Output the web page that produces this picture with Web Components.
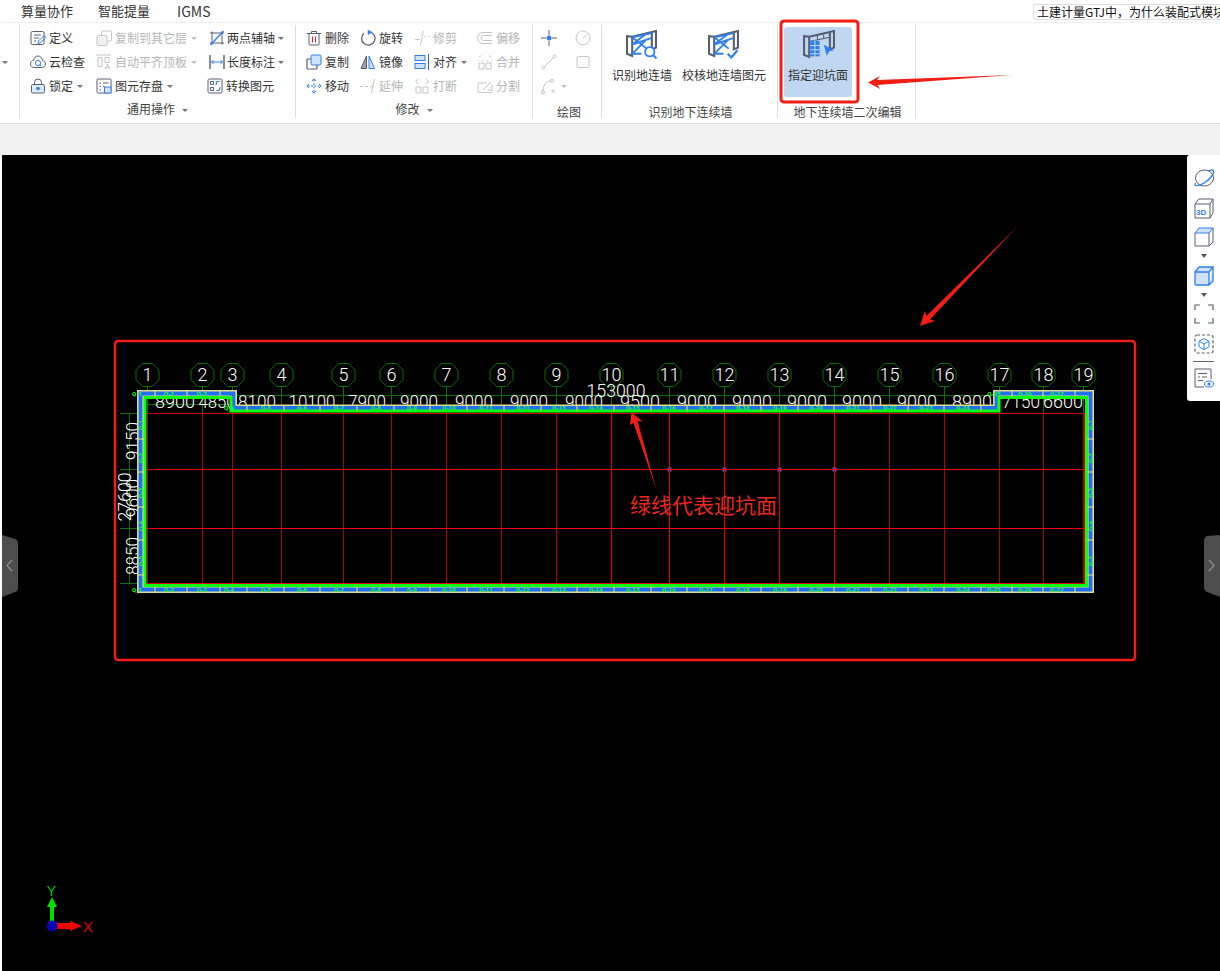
<!DOCTYPE html>
<html lang="zh">
<head>
<meta charset="utf-8">
<title>GTJ</title>
<style>
html, body { margin: 0; padding: 0; background: #fff; }
body { width: 1220px; height: 971px; overflow: hidden; position: relative; font: 12px "Noto Sans CJK SC", "Liberation Sans", sans-serif; color: #333; }
</style>
</head>
<body>
<gtj-tabs>
    <span>算量协作</span>
    <span>智能提量</span>
    <span style="font-size:14px;margin-left:2px">IGMS</span>
    <gtj-search slot="search">土建计量GTJ中，为什么装配式模块</gtj-search>
</gtj-tabs>

<gtj-ribbon>
    <gtj-group style="--w:20px;--pad:2px">
        <gtj-caret style="margin-top:35px"></gtj-caret>
    </gtj-group>

    <gtj-group label="通用操作" caret style="--w:276px;--pad:10px;--cols:66px 113px 1fr;--shift:-4px">
        <gtj-item icon="define">定义</gtj-item>
        <gtj-item icon="copylayer" disabled caret>复制到其它层</gtj-item>
        <gtj-item icon="twopoint" caret style="gap:2px">两点辅轴</gtj-item>
        <gtj-item icon="cloud">云检查</gtj-item>
        <gtj-item icon="level" disabled caret>自动平齐顶板</gtj-item>
        <gtj-item icon="length" caret style="gap:2px">长度标注</gtj-item>
        <gtj-item icon="lock" caret>锁定</gtj-item>
        <gtj-item icon="storage" caret>图元存盘</gtj-item>
        <gtj-item icon="convert" style="margin-left:-2px">转换图元</gtj-item>
    </gtj-group>

    <gtj-group label="修改" caret style="--w:237px;--pad:10px;--cols:54px 54px 63px 1fr">
        <gtj-item icon="trash">删除</gtj-item>
        <gtj-item icon="rotate">旋转</gtj-item>
        <gtj-item icon="trim" disabled>修剪</gtj-item>
        <gtj-item icon="offset" disabled>偏移</gtj-item>
        <gtj-item icon="copy">复制</gtj-item>
        <gtj-item icon="mirror">镜像</gtj-item>
        <gtj-item icon="align" caret>对齐</gtj-item>
        <gtj-item icon="merge" disabled>合并</gtj-item>
        <gtj-item icon="move">移动</gtj-item>
        <gtj-item icon="extend" disabled>延伸</gtj-item>
        <gtj-item icon="break" disabled>打断</gtj-item>
        <gtj-item icon="split" disabled>分割</gtj-item>
    </gtj-group>

    <gtj-group label="绘图" low style="--w:69px;--pad:8px;--cols:34px 1fr;--shift:4px">
        <gtj-item icon="point"></gtj-item>
        <gtj-item icon="gauge" disabled></gtj-item>
        <gtj-item icon="line" disabled></gtj-item>
        <gtj-item icon="rrect" disabled></gtj-item>
        <gtj-item icon="arc" disabled caret></gtj-item>
    </gtj-group>

    <gtj-group label="识别地下连续墙" low style="--w:176px;--pad:10px;--cols:60px 84px;--gap:10px;--rows:72px;--shift:2px">
        <gtj-big icon="find" style="--nudge:-2px">识别地连墙</gtj-big>
        <gtj-big icon="check" style="--nudge:-2px">校核地连墙图元</gtj-big>
    </gtj-group>

    <gtj-group label="地下连续墙二次编辑" low style="--w:138px;--pad:6px;--cols:68px;--rows:72px;--shift:2px">
        <gtj-big icon="face" active>指定迎坑面</gtj-big>
    </gtj-group>
</gtj-ribbon>

<gtj-band></gtj-band>

<cad-view>
    <cad-drawing></cad-drawing>
    <cad-handle side="left"></cad-handle>
    <cad-handle side="right"></cad-handle>
    <cad-viewbar></cad-viewbar>
</cad-view>

<cad-notes></cad-notes>

<script>
const ICONS = {
    define: `<rect class="d" x="1" y="1.5" width="13" height="13" rx="1.5"/><path class="d" d="M4 5h7M4 8h5M4 11h2"/><path class="b" d="M8 13.5l.5-2.5 5.5-5.5 1.8 1.8-5.5 5.6z"/>`,
    cloud: `<path class="d" d="M4.2 13.5C2 13.500.5 12 .5 10s1.500-3.300 3-3.500C4 3.500 6 2 8 2s4 1.500 4.500 4.500c1.800.2 3 1.700 3 3.500s-1.500 3.500-3.700 3.500z"/><circle class="b" cx="8" cy="9" r="2.600"/><path class="b" d="M10 11l1.500 1.300"/>`,
    lock: `<path class="d" d="M4.500 6.500V4.500a3.500 3.500 0 0 1 7 0v2"/><rect class="d" x="1.500" y="6.500" width="13" height="8.500" rx="1.200" style="fill:#dfeafa"/><path class="s" d="M8 9v3.500M6.500 9.500h3v2h-3z"/>`,
    copylayer: `<rect class="g" x="5.500" y="1" width="10" height="10" rx="1.500"/><rect class="g" x="1" y="5.500" width="10" height="10" rx="1.500" style="fill:#f2f2f2"/>`,
    level: `<path class="g" d="M0 1h15M2 3.500h4v9H2zM9 3.500h4v5H9z"/><path class="g" d="M9 15l2.500-5 2.500 5M10 13.500h3"/>`,
    storage: `<rect class="d" x="1" y="1" width="14" height="14" rx="1.200"/><path class="d" d="M3.500 5h1.500M7 5h5.500M3.500 8.500h1.500M3.500 12h1.500M7 8.500h1.500"/><rect class="f" x="8.500" y="9" width="6.500" height="6"/>`,
    twopoint: `<path class="d" d="M3 1.500v13M1 3h14M1 13h14M13 1.500v13"/><path class="b" style="stroke-width:1.500" d="M1.500 15L14.500 1"/>`,
    length: `<path class="d" style="stroke-width:1.400" d="M1 1v14M15 1v14"/><path class="b" d="M2.500 8h11M4.500 6l-2 2 2 2M11.500 6l2 2-2 2"/>`,
    convert: `<rect class="d" x="1" y="1" width="14" height="14" rx="1.500"/><path class="d" d="M3.500 3.500h3v3h-3zM3.500 9.500h3v3h-3z"/><path class="b" d="M9.500 6.500v-3h3M12.500 9.500v3h-3M9.500 5l-1 1.500M12.500 11l1-1.500"/>`,
    trash: `<path class="d" d="M1 3.500h14M5.500 3.500V1.500h5v2"/><path class="d" d="M3 3.500v10.500a1 1 0 0 0 1 1h8a1 1 0 0 0 1-1V3.500"/><path class="r" d="M6.500 6.500v6M9.500 6.500v6"/>`,
    rotate: `<path class="d" style="stroke-width:1.300" d="M9.500 1.800A6.700 6.700 0 1 1 4 3.300"/><path class="s" d="M8 .2l4 2-4 2.400z"/>`,
    trim: `<path class="g" d="M1 9.500h5M10 6.500h1.500M14 6.500h1.500M6.500 15L9.500 1"/>`,
    offset: `<path class="g" d="M15 2.500H6a5.500 5.500 0 0 0 0 11h9M15 5.500H6.500a2.500 2.500 0 0 0 0 5H15"/>`,
    copy: `<rect class="f" x="5" y="1" width="10" height="10" rx="1.200"/><path class="d" style="stroke-width:1.200" d="M5 5H2a1 1 0 0 0-1 1v8a1 1 0 0 0 1 1h8a1 1 0 0 0 1-1v-3"/>`,
    mirror: `<path class="d" style="fill:#9aa2b2;stroke:#565e70" d="M6.500 2L1 14.500h5.500z"/><path class="f" d="M9 2l5.500 12.500H9z"/>`,
    align: `<rect class="f" x="1" y="1.500" width="10" height="5"/><rect class="f" x="1" y="9.500" width="10" height="5"/><path class="d" d="M14.500 0v16"/>`,
    merge: `<path class="g" d="M4 1.500l-2 2M12 1.500l2 2M2 9h5v6H2zM9 9h5v6H9z"/><path class="g" d="M1 6.500h1M5 6.500h1M10 6.500h1M14 6.500h1"/>`,
    move: `<path class="b" style="stroke-dasharray:2 1.400" d="M8 1.500v13M1.500 8h13"/><path class="b" d="M6 3l2-2.200L10 3M6 13l2 2.200 2-2.200M3 6L.8 8 3 10M13 6l2.200 2-2.200 2"/>`,
    extend: `<path class="g" d="M0 8.500h3M5 8.500h3M10 8.500h3M11.500 15L14.500 1"/>`,
    break: `<path class="g" d="M2 9h5v6H2zM9 9h5v6H9zM4 1L1.500 3.500 4 6M12 1l2.500 2.500L12 6"/>`,
    split: `<path class="g" d="M15 7v6.500a1 1 0 0 1-1 1H2a1 1 0 0 1-1-1V6a1 1 0 0 1 1-1h7M6 12l8-8M10.500 12H14"/>`,
    point: `<path class="d" d="M0 8h5M11 8h5M8 0v5M8 11v5"/><circle cx="8" cy="8" r="2.500" fill="#2f80ed"/>`,
    gauge: `<circle class="g" cx="8" cy="8" r="7"/><path class="g" d="M8 8l3.500-3.500"/>`,
    line: `<path class="g" d="M3.500 12.500L12.500 3.500"/><circle class="g" cx="2.500" cy="13.500" r="1.500"/><circle class="g" cx="13.500" cy="2.500" r="1.500"/>`,
    rrect: `<rect class="g" x="2" y="2.500" width="12" height="11" rx="1.500"/>`,
    arc: `<path class="g" d="M2 12C2.500 7 5 3.500 9 2.800"/><circle class="g" cx="2" cy="14" r="1.500"/><circle class="g" cx="11" cy="2.800" r="1.500"/><circle class="g" cx="12" cy="13" r="1.200"/>`,
};

// big ribbon icons sit on a 30x28 box: the steel frame is shared
const FRAME = `<path class="d" style="stroke-width:2" d="M1 6v17l5 2V6.500zM1 6l5 .5M25 2l4-1v16l-4 1.500zM25 2L6 6.500"/>`;
const TRUSS = `<path class="b" style="stroke-width:1.800" d="M6 7L25 3M6 14l19-6.500M6 14l13-10M6 7l14 11M6 23l13-13M6 23h9"/>`;
const BIG_ICONS = {
    find: FRAME + TRUSS + `<circle cx="23" cy="21" r="4.500" fill="#fff" stroke="#2f80ed" stroke-width="1.800"/><path class="b" style="stroke-width:2" d="M26.500 24.500l3 3"/>`,
    check: FRAME + TRUSS + `<path class="b" style="stroke-width:2.200" d="M19 23l3.500 3.500 6-7"/>`,
    face: `<path class="d" style="stroke-width:2" d="M1 6v18l5 2V6.500zM1 6l5 .5M26 2l4-1v16l-4 1.500zM26 2L6 6.500"/><path class="d" d="M6 11l20-4M14 5v5M20 4v5"/><rect x="7" y="10.500" width="9" height="15" fill="#2f80ed"/><path d="M7 15h9M7 19h9M7 23h9M11.500 10v16" stroke="#c0d8f0" fill="none"/><path fill="#2f80ed" d="M20 14l10 5.500-4.500 1-2.500 4.500z"/>`,
};

const VIEW_ICONS = {
    globe: `<ellipse class="d" cx="10.500" cy="10" rx="9" ry="8"/><path class="b" style="stroke-width:1.400" d="M1.500 15C-.5 19 5 18 10 15s10.500-9 9.500-12c-.5-1.500-3-1-5 .2"/>`,
    cube3d: `<path class="d" d="M1 6h15v14H1zM1 6l4-5h14l-3 5M19 1v14l-3 5"/><text x="2" y="16.500" font-size="8" font-weight="700" fill="#2f80ed" font-family="Liberation Sans">3D</text>`,
    cubetop: `<path class="d" d="M1 7v13h14V7M15 20l4-4V2"/><path class="f" d="M1 7l4-5h14L15 7z"/>`,
    cubefill: `<path class="f" style="stroke-width:1.300" d="M1 7h14v13H2a1 1 0 0 1-1-1zM1 7l4-5h14L15 7M19 2v14l-4 4"/>`,
    corners: `<path class="d" style="stroke-width:1.200" d="M1 6V1h5M14 1h5v5M19 14v5h-5M6 19H1v-5"/>`,
    dashed: `<rect class="d" style="stroke-dasharray:3 2;stroke-width:1.200" x="1" y="1" width="18" height="18" rx="2"/><path class="b" d="M10 4.500l5 2.700v5.600l-5 2.700-5-2.700V7.200zM5 7.200l5 2.800 5-2.800M10 10v5.500"/>`,
    list: `<path class="d" d="M17 11V1H1v18h9"/><path class="d" d="M4 5.500h9M4 9h2M8 9h5M4 12.500h5"/><ellipse class="b" cx="15" cy="16" rx="4.500" ry="3"/><circle cx="15" cy="16" r="1.500" fill="#2f80ed"/>`,
};

const ICON_STYLE = `
.d { fill: none; stroke: #565e70; }
.b { fill: none; stroke: #2f80ed; }
.s { fill: #2f80ed; stroke: #2f80ed; stroke-width: .6; }
.f { fill: #cfe2fa; stroke: #2f80ed; }
.g { fill: none; stroke: #c4c4c4; }
.r { fill: none; stroke: #e02020; }
`;

customElements.define('gtj-tabs', class extends HTMLElement {
    constructor() {
        super();
        this.attachShadow({mode: 'open'}).innerHTML = `
<style>
:host {
    display: flex;
    height: 23px;
    box-sizing: border-box;
    border-bottom: 1px solid #eeeeee;
    background: #fff;
    position: relative;
    font-size: 13px;
    color: #333;
}
.tabs {
    display: flex;
    gap: 25px;
    padding-left: 21px;
    line-height: 22px;
}
.search {
    margin-left: auto;
    padding-top: 4px;
    width: 187px;
}
</style>
<div class="tabs"><slot></slot></div>
<div class="search"><slot name="search"></slot></div>
        `;
    }
});

customElements.define('gtj-search', class extends HTMLElement {
    constructor() {
        super();
        this.attachShadow({mode: 'open'}).innerHTML = `
<style>
:host {
    display: block;
    height: 16px;
    box-sizing: border-box;
    border: 1px solid #dddddd;
    border-right: 0;
    border-radius: 2px 0 0 2px;
    padding-left: 3px;
    font-size: 12px;
    line-height: 14px;
    color: #111;
    white-space: nowrap;
    overflow: hidden;
}
</style>
<slot></slot>
        `;
    }
});

customElements.define('gtj-ribbon', class extends HTMLElement {
    constructor() {
        super();
        this.attachShadow({mode: 'open'}).innerHTML = `
<style>
:host {
    display: flex;
    height: 100px;
    box-sizing: border-box;
    padding: 2px 0 5px;
    background: #fff;
}
</style>
<slot></slot>
        `;
    }
});

customElements.define('gtj-caret', class extends HTMLElement {
    constructor() {
        super();
        this.attachShadow({mode: 'open'}).innerHTML = `
<style>
:host {
    display: inline-block;
    width: 0;
    height: 0;
    border-left: 3px solid transparent;
    border-right: 3px solid transparent;
    border-top: 3px solid var(--caret, #777);
    vertical-align: middle;
}
</style>
        `;
    }
});

customElements.define('gtj-group', class extends HTMLElement {
    connectedCallback() {
        if (this.shadowRoot) return;
        const label = this.getAttribute("label") || "";
        const caret = this.hasAttribute("caret") ? `<gtj-caret style="margin-left:7px"></gtj-caret>` : "";
        this.attachShadow({mode: 'open'}).innerHTML = `
<style>
:host {
    display: block;
    width: var(--w);
    box-sizing: border-box;
    border-right: 1px solid #dcdcdc;
    flex: none;
}
.body {
    display: grid;
    grid-template-columns: var(--cols, 1fr);
    grid-auto-rows: var(--rows, 24px);
    column-gap: var(--gap, 0);
    height: 72px;
    margin-top: 1px;
    padding-left: var(--pad);
}
.label {
    height: 20px;
    box-sizing: border-box;
    padding-top: 2px;
    padding-left: var(--shift, 0);
    text-align: center;
    line-height: 17px;
    color: #444;
    white-space: nowrap;
}
:host([low]) .label {
    padding-top: 5px;
}
</style>
<div class="body"><slot></slot></div>
<div class="label">${label}${caret}</div>
        `;
    }
});

customElements.define('gtj-item', class extends HTMLElement {
    connectedCallback() {
        if (this.shadowRoot) return;
        const caret = this.hasAttribute("caret") ? `<gtj-caret></gtj-caret>` : "";
        this.attachShadow({mode: 'open'}).innerHTML = `
<style>
:host {
    display: flex;
    align-items: center;
    gap: 3px;
    color: #333;
    white-space: nowrap;
    line-height: 24px;
}
:host([disabled]) {
    color: #b5b5b5;
    --caret: #c0c0c0;
}
${ICON_STYLE}
svg {
    width: 16px;
    height: 16px;
    flex: none;
    overflow: visible;
}
gtj-caret {
    margin-left: 1px;
}
</style>
<svg viewBox="0 0 16 16">${ICONS[this.getAttribute("icon")] || ""}</svg>
<slot></slot>
${caret}
        `;
    }
});

customElements.define('gtj-big', class extends HTMLElement {
    connectedCallback() {
        if (this.shadowRoot) return;
        this.attachShadow({mode: 'open'}).innerHTML = `
<style>
:host {
    display: flex;
    flex-direction: column;
    align-items: center;
    height: 70px;
    margin-top: 1px;
    box-sizing: border-box;
    padding-top: 3px;
    border-radius: 3px;
    color: #333;
    white-space: nowrap;
}
:host([active]) {
    background: #bfd7f0;
}
${ICON_STYLE}
svg {
    width: 31px;
    height: 29px;
    flex: none;
    overflow: visible;
    margin-left: var(--nudge, 0);
}
.text {
    margin-top: 8px;
    line-height: 16px;
}
</style>
<svg viewBox="0 0 30 28">${BIG_ICONS[this.getAttribute("icon")] || ""}</svg>
<div class="text"><slot></slot></div>
        `;
    }
});

customElements.define('gtj-band', class extends HTMLElement {
    constructor() {
        super();
        this.attachShadow({mode: 'open'}).innerHTML = `
<style>
:host {
    display: block;
    height: 32px;
    box-sizing: border-box;
    background: #f1f1f1;
    border-top: 1px solid #dcdcdc;
}
</style>
        `;
    }
});

customElements.define('cad-view', class extends HTMLElement {
    constructor() {
        super();
        this.attachShadow({mode: 'open'}).innerHTML = `
<style>
:host {
    display: block;
    position: relative;
    height: 816px;
    margin-left: 2px;
    background: #000;
    overflow: hidden;
}
</style>
<slot></slot>
        `;
    }
});

customElements.define('cad-handle', class extends HTMLElement {
    connectedCallback() {
        if (this.shadowRoot) return;
        const right = this.getAttribute("side") === "right";
        const shape = right
            ? `<path fill="#4d4d4d" d="M0 6Q0 2 3 1L16 0V62L3 57Q0 56 0 52z"/><path fill="none" stroke="#8c8c8c" stroke-width="1.400" d="M5 25l5 5.500-5 5.500"/>`
            : `<path fill="#4d4d4d" d="M0 0L13 4Q16 5 16 9V53Q16 56 13 57L0 62z"/><path fill="none" stroke="#8c8c8c" stroke-width="1.400" d="M10 25l-5 5.500 5 5.500"/>`;
        this.attachShadow({mode: 'open'}).innerHTML = `
<style>
:host {
    display: block;
    position: absolute;
    top: 380px;
    width: 16px;
    height: 62px;
}
:host([side="left"]) { left: 0; }
:host([side="right"]) { right: 0; }
svg { display: block; }
</style>
<svg width="16" height="62" viewBox="0 0 16 62">${shape}</svg>
        `;
    }
});

customElements.define('cad-viewbar', class extends HTMLElement {
    constructor() {
        super();
        const icon = (name, top) => `<svg style="margin-top:${top}px" width="20" height="20" viewBox="0 0 20 20">${VIEW_ICONS[name]}</svg>`;
        const caret = top => `<i class="caret" style="margin-top:${top}px"></i>`;
        this.attachShadow({mode: 'open'}).innerHTML = `
<style>
:host {
    display: flex;
    flex-direction: column;
    align-items: center;
    position: absolute;
    top: 0;
    right: 0;
    width: 33px;
    height: 246px;
    box-sizing: border-box;
    background: #fff;
    border-radius: 3px 0 0 3px;
    padding-left: 0;
}
${ICON_STYLE}
svg { display: block; overflow: visible; flex: none; }
.caret {
    display: block;
    width: 0;
    height: 0;
    border-left: 3.500px solid transparent;
    border-right: 3.500px solid transparent;
    border-top: 4px solid #555;
}
hr {
    width: 21px;
    margin: 7px 0 0;
    border: 0;
    border-top: 1px solid #666;
}
</style>
${icon("globe", 13)}
${icon("cube3d", 10)}
${icon("cubetop", 8)}
${caret(8)}
${icon("cubefill", 7)}
${caret(8)}
${icon("corners", 7)}
${icon("dashed", 10)}
<hr>
${icon("list", 6)}
        `;
    }
});

customElements.define('cad-drawing', class extends HTMLElement {
    constructor() {
        super();
        this.attachShadow({mode: 'open'}).innerHTML = `
<style>
:host { display: block; width: 1218px; height: 816px; }
svg { display: block; }
text { font-family: Roboto, "Liberation Sans", sans-serif; }
.dim { fill: #fff; font-size: 19px; font-weight: 300; text-anchor: middle; }
.no { fill: #fff; font-size: 18px; font-weight: 300; text-anchor: middle; }
.tag { fill: #20ff20; font-size: 6px; font-weight: 700; text-anchor: middle; }
.axis { font-family: "Liberation Sans", sans-serif; text-anchor: middle; }
</style>
<svg width="1218" height="816" viewBox="2 155 1218 816">${this.#scene()}</svg>
        `;
    }

    #scene() {
        const axes = [147, 202, 232, 281, 343, 391, 446, 501, 556, 611, 669, 724, 779, 834, 889, 944, 999, 1043, 1083];
        const hy = [413, 469, 528, 583];
        const top = [[175, "8900", 40], [217, "4850", 37], [257, "8100", 38], [312, "10100", 47], [367, "7900", 38], [419, "9000", 38], [474, "9000", 38], [529, "9000", 38], [584, "9000", 38], [640, "9500", 40], [697, "9000", 40], [752, "9000", 40], [807, "9000", 40], [862, "9000", 40], [917, "9000", 40], [972, "8900", 40], [1021, "7150", 38], [1063, "6600", 40]];
        let s = "";

        // dimension lines
        s += `<g stroke="#0a6e0a" fill="none">`;
        s += `<path d="M147 395.500H1083M147 404.500H232M129.500 413V583M120 413.500H147M120 469.500H147M120 528.500H147M120 583.500H147"/>`;
        axes.forEach(x => s += `<path d="M${x + .5} 387V413"/>`);
        s += `</g>`;

        // axis bubbles
        axes.forEach((x, i) => {
            const points = [];
            for (let k = 0; k < 8; k++) {
                const a = Math.PI / 4 * k + Math.PI / 8;
                points.push(`${(x + .5 + 12.5 * Math.cos(a)).toFixed(1)},${(375 + 12.5 * Math.sin(a)).toFixed(1)}`);
            }
            s += `<polygon points="${points.join(" ")}" fill="none" stroke="#0a6e0a"/>`;
            s += `<text class="no" x="${x + .5}" y="381">${i + 1}</text>`;
        });

        // dimension texts
        top.forEach(([x, t, w]) => s += `<text class="dim" x="${x}" y="407.500" textLength="${w}" lengthAdjust="spacingAndGlyphs">${t}</text>`);
        [[441, "9150", 139, 38], [498, "9600", 139, 38], [556, "8850", 139, 38], [497, "27600", 131, 49]].forEach(([y, t, x, w]) => {
            s += `<text class="dim" transform="translate(${x} ${y}) rotate(-90)" textLength="${w}" lengthAdjust="spacingAndGlyphs">${t}</text>`;
        });

        // column markers sit under the grid lines
        [669, 724, 779, 834].forEach(x => s += `<rect x="${x - 1.500}" y="467.500" width="4" height="4" fill="#6a4bd0"/>`);

        // grid
        axes.forEach((x, i) => {
            const bright = i >= 9 && i <= 13;
            s += `<path d="M${x + .5} 413V583" stroke="${bright ? "#f00000" : "#b40000"}" fill="none"/>`;
        });
        hy.forEach((y, i) => {
            s += `<path d="M147 ${y + .5}H1084" stroke="${i === 0 ? "#c80000" : "#f00000"}" fill="none"/>`;
        });
        s += `<path d="M1084.500 413V583" stroke="#a00000" fill="none"/>`;

        // walls
        const wall = "M140.500 393.500H233.500V408H996.500V393.500H1090.500V589.500H140.500Z";
        s += `<path d="${wall}" fill="none" stroke="#dcdc90" stroke-width="7"/>`;
        s += `<path d="${wall}" fill="none" stroke="#1f6ff0" stroke-width="3.800"/>`;
        s += `<path d="M145 397.500H231V411H999V397.500H1086.500V585.500H145Z" fill="none" stroke="#0cff0c" stroke-width="3"/>`;
        s += `<path d="M147 583.500H1084.500V413" fill="none" stroke="#e00000"/>`;

        // wall segments: yellow joints with their small tags
        const joints = [];
        const tags = [];
        const ticksX = [155, 187, 220];
        for (let x = 247; x < 990; x += 36.7) ticksX.push(Math.round(x));
        [1012, 1043, 1075].forEach(x => ticksX.push(x));
        ticksX.forEach((x, i) => {
            const upper = x < 233 || x > 997;
            const y = upper ? 393.500 : 408;
            joints.push(`M${x} ${y - 3}v6.500`);
            joints.push(`M${x} 586.500v6`);
            tags.push(`<text class="tag" x="${x - 18}" y="${y + 2}">Q-${i + 1}</text>`);
            tags.push(`<text class="tag" x="${x - 18}" y="591.500">Q-${i + 1}</text>`);
        });
        [439, 472, 507, 540, 575].forEach((y, i) => {
            joints.push(`M137.500 ${y}h6.500M1087.500 ${y}h6.500`);
            tags.push(`<text class="tag" transform="translate(142.500 ${y - 14}) rotate(-90)">Q-${i + 1}</text>`);
            tags.push(`<text class="tag" transform="translate(1092.500 ${y - 14}) rotate(-90)">Q-${i + 1}</text>`);
        });
        s += `<path d="${joints.join("")}" stroke="#f0f060" fill="none"/>`;
        s += tags.join("");

        // overall length sits above everything
        s += `<text class="dim" x="616" y="396.500" textLength="59" lengthAdjust="spacingAndGlyphs">153000</text>`;

        // axis gizmo
        s += `<path d="M50 926V907H47L52 897L57 907H54V926z" fill="#00e000"/>`;
        s += `<path d="M52 923H70V921L82 926L70 931V929H52z" fill="#f00000"/>`;
        s += `<circle cx="52" cy="926" r="5.500" fill="#0000b4"/>`;
        s += `<text class="axis" x="51.500" y="896" fill="#00c000" font-size="14">Y</text>`;
        s += `<text class="axis" x="88" y="932" fill="#e00000" font-size="15">X</text>`;
        return s;
    }
});

customElements.define('cad-notes', class extends HTMLElement {
    constructor() {
        super();
        this.attachShadow({mode: 'open'}).innerHTML = `
<style>
:host {
    position: absolute;
    left: 0;
    top: 0;
    width: 1220px;
    height: 971px;
    pointer-events: none;
}
svg { display: block; }
text { font-family: "Noto Sans CJK SC", sans-serif; }
</style>
<svg width="1220" height="971" viewBox="0 0 1220 971">
    <rect x="781" y="21" width="77" height="81" rx="3" fill="none" stroke="#f21d14" stroke-width="3"/>
    <rect x="115" y="341" width="1020" height="319" rx="3" fill="none" stroke="#f21d14" stroke-width="2.500"/>
    <polygon fill="#f21d14" points="868,82.500 880,76 877,80 1012,75 877.500,85 880,89"/>
    <polygon fill="#f21d14" points="920,326 924.800,311.100 926.600,315.700 1017,227 930.200,319.200 934.800,320.900"/>
    <polygon fill="#f21d14" points="631.500,412.500 642.500,421.500 637.500,421 656.500,490 633.500,423 630,425"/>
    <text x="630" y="513" fill="#e8281e" font-size="21">绿线代表迎坑面</text>
</svg>
        `;
    }
});
</script>
</body>
</html>
